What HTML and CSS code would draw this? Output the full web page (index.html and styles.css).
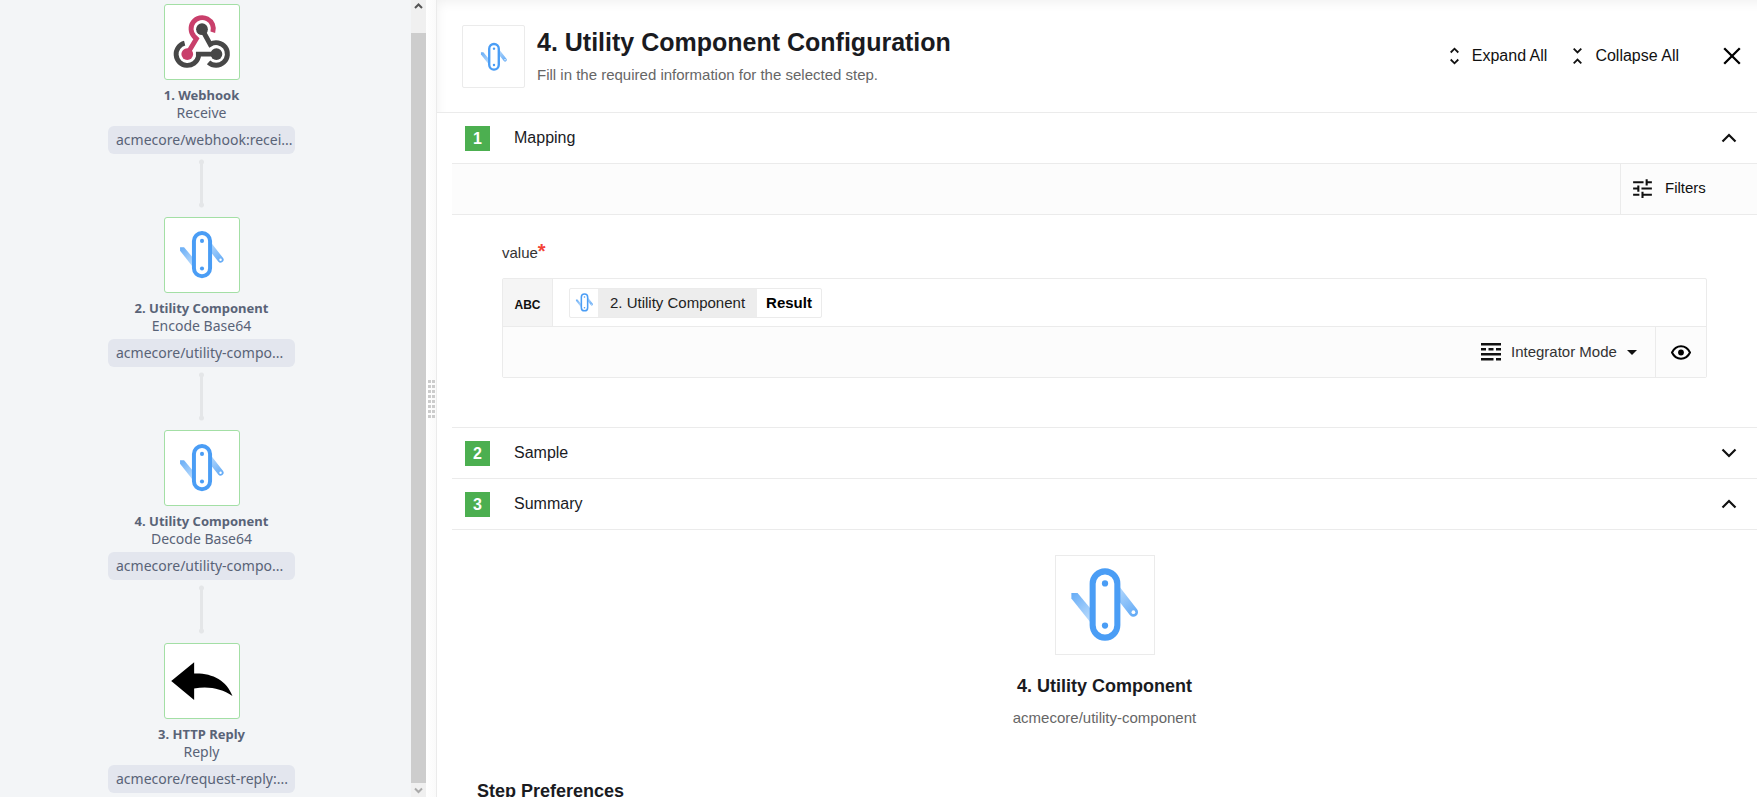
FILE: index.html
```html
<!DOCTYPE html>
<html lang="en">
<head>
<meta charset="utf-8">
<title>Utility Component Configuration</title>
<link rel="stylesheet" href="styles.css">
</head>
<body>
<svg class="defs" aria-hidden="true">
  <defs>
    <linearGradient id="bladeLeft" x1="0" y1="0" x2="0.6" y2="1">
      <stop offset="0" stop-color="#66acf6"/><stop offset="1" stop-color="#b4d8fc"/>
    </linearGradient>
    <linearGradient id="bladeRight" gradientUnits="userSpaceOnUse" x1="80" y1="60" x2="62" y2="34">
      <stop offset="0" stop-color="#66acf6"/><stop offset="1" stop-color="#b4d8fc"/>
    </linearGradient>
    <symbol id="utility" viewBox="0 0 100 100">
      <path d="M15.7 37.7H22L36 54.5V69L15.7 43.3Z" fill="url(#bladeLeft)"/>
      <path d="M57 29L79 57.3" stroke="url(#bladeRight)" stroke-width="9.4" stroke-linecap="round"/>
      <circle cx="79" cy="57.3" r="1.9" fill="#fff"/>
      <rect x="37.4" y="15.7" width="25.2" height="67.6" rx="12.6" fill="#fff" stroke="#4a9df5" stroke-width="6.2"/>
      <circle cx="50" cy="28" r="3.2" fill="#4a9df5"/>
      <circle cx="50" cy="71" r="3.2" fill="#4a9df5"/>
    </symbol>
    <symbol id="chevron-up" viewBox="0 0 16 16">
      <path d="M1.5 11.5L8 5L14.5 11.5" fill="none" stroke="#111" stroke-width="2.2"/>
    </symbol>
    <symbol id="chevron-down" viewBox="0 0 16 16">
      <path d="M1.5 4.5L8 11L14.5 4.5" fill="none" stroke="#111" stroke-width="2.2"/>
    </symbol>
  </defs>
</svg>
<div class="app">
  <aside class="flow">
    <ol class="steps">
      <li class="step">
        <button class="step-box" aria-label="Webhook">
          <svg class="fill-icon" viewBox="222 16 226 226" fill="none">
            <path d="M368 99A34 34 0 1 0 311 112L318 119L290 166" stroke="#c93f6b" stroke-width="15"/>
            <circle cx="290" cy="166" r="18" fill="#c93f6b"/>
            <path d="M282 132.500A34.500 34.500 0 1 0 324 174V166H379" stroke="#474747" stroke-width="15"/>
            <path d="M335 90L360 136A34.500 34.500 0 1 1 355 191" stroke="#474747" stroke-width="15"/>
            <circle cx="335" cy="90" r="18" fill="#474747"/>
            <circle cx="379" cy="166" r="18" fill="#474747"/>
          </svg>
        </button>
        <span class="step-name">1. Webhook</span>
        <span class="step-action">Receive</span>
        <span class="step-path">acmecore/webhook:recei...</span>
        <span class="link-line"></span>
      </li>
      <li class="step">
        <button class="step-box" aria-label="Utility Component"><svg class="icon-64"><use href="#utility"/></svg></button>
        <span class="step-name">2. Utility Component</span>
        <span class="step-action">Encode Base64</span>
        <span class="step-path">acmecore/utility-compo...</span>
        <span class="link-line"></span>
      </li>
      <li class="step">
        <button class="step-box" aria-label="Utility Component"><svg class="icon-64"><use href="#utility"/></svg></button>
        <span class="step-name">4. Utility Component</span>
        <span class="step-action">Decode Base64</span>
        <span class="step-path">acmecore/utility-compo...</span>
        <span class="link-line"></span>
      </li>
      <li class="step">
        <button class="step-box" aria-label="HTTP Reply">
          <svg class="fill-icon" viewBox="222 68 226 226"><path d="M241 181L311 124V158C365 156 410 178 428 227C395 204 355 196 311 204V239Z" fill="#000"/></svg>
        </button>
        <span class="step-name">3. HTTP Reply</span>
        <span class="step-action">Reply</span>
        <span class="step-path">acmecore/request-reply:...</span>
      </li>
    </ol>
    <div class="scrollbar">
      <svg class="scroll-up" viewBox="0 0 15 33"><path d="M4 8L7.500 4.500L11 8" fill="none" stroke="#555" stroke-width="2"/></svg>
      <div class="scroll-thumb"></div>
      <svg class="scroll-down" viewBox="0 0 15 14"><path d="M4 5.500L7.500 9L11 5.500" fill="none" stroke="#aaa" stroke-width="2"/></svg>
    </div>
  </aside>
  <div class="splitter">
    <div class="grip"><i></i><i></i><i></i><i></i><i></i><i></i><i></i><i></i><i></i><i></i><i></i><i></i><i></i><i></i><i></i><i></i></div>
  </div>
  <main class="panel">
    <header class="panel-head">
      <div class="head-icon"><svg class="icon-38"><use href="#utility"/></svg></div>
      <div class="head-text">
        <h1>4. Utility Component Configuration</h1>
        <p>Fill in the required information for the selected step.</p>
      </div>
      <div class="head-actions">
        <button class="text-btn">
          <svg class="fold" viewBox="0 0 9 18"><path d="M0.700 5.500L4.500 1.700L8.300 5.500M0.700 12.500L4.500 16.300L8.300 12.500" fill="none" stroke="#111" stroke-width="1.800"/></svg>
          Expand All
        </button>
        <button class="text-btn">
          <svg class="fold" viewBox="0 0 9 18"><path d="M0.700 1.700L4.500 5.500L8.300 1.700M0.700 16.300L4.500 12.500L8.300 16.300" fill="none" stroke="#111" stroke-width="1.800"/></svg>
          Collapse All
        </button>
        <button class="close" aria-label="Close"><svg viewBox="0 0 18 18"><path d="M1.200 1.200L16.800 16.800M16.800 1.200L1.200 16.800" stroke="#000" stroke-width="2.300"/></svg></button>
      </div>
    </header>

    <section class="block">
      <button class="block-head"><span class="num">1</span><span class="block-title">Mapping</span><svg class="chev"><use href="#chevron-up"/></svg></button>
      <div class="toolbar">
        <button class="filters">
          <svg viewBox="0 0 24 24"><path d="M3 17v2h6v-2zM3 5v2h10V5zM13 21v-2h8v-2h-8v-2h-2v6zM7 9v2H3v2h4v2h2V9zM21 13v-2H11v2zM15 9h2V7h4V5h-4V3h-2z" fill="#111"/></svg>
          Filters
        </button>
      </div>
      <div class="mapping">
        <label class="field-label" for="value">value<span class="req">*</span></label>
        <div class="field">
          <div class="field-row">
            <span class="type">ABC</span>
            <div class="field-value">
              <span class="pill"><span class="pill-icon"><svg class="icon-25"><use href="#utility"/></svg></span><span class="pill-step">2. Utility Component</span><strong class="pill-prop">Result</strong></span>
              <input id="value" type="text">
            </div>
          </div>
          <div class="field-foot">
            <label class="mode">
              <svg class="mode-icon" viewBox="0 0 20 18" aria-label="Mode"><path d="M0 1.300H20M0 6.300H5M7.500 6.300H12.500M15 6.300H20M0 11.300H20M0 16.300H12.500M15 16.300H20" stroke="#111" stroke-width="2.500"/></svg>
              <select><option>Integrator Mode</option></select>
              <svg class="caret" viewBox="0 0 10 5"><path d="M0 0H10L5 5Z" fill="#111"/></svg>
            </label>
            <button class="eye" aria-label="Preview"><svg viewBox="0 0 20 15"><path d="M1 7.500C5 -0.800 15 -0.800 19 7.500C15 15.800 5 15.800 1 7.500Z" fill="none" stroke="#000" stroke-width="2"/><circle cx="10" cy="7.500" r="2.900"/></svg></button>
          </div>
        </div>
      </div>
    </section>

    <section class="block">
      <button class="block-head"><span class="num">2</span><span class="block-title">Sample</span><svg class="chev"><use href="#chevron-down"/></svg></button>
    </section>

    <section class="block">
      <button class="block-head"><span class="num">3</span><span class="block-title">Summary</span><svg class="chev"><use href="#chevron-up"/></svg></button>
      <div class="summary">
        <div class="summary-icon"><svg><use href="#utility"/></svg></div>
        <h2>4. Utility Component</h2>
        <p>acmecore/utility-component</p>
      </div>
      <h2 class="prefs">Step Preferences</h2>
    </section>
  </main>
</div>
</body>
</html>
```
FILE: styles.css
```css
* { box-sizing: border-box; }
body {
  margin: 0;
  color: #1a1b1f;
  background: #fff;
  font: 15px/20px "Liberation Sans", Arial, sans-serif;
}
h1, h2, p, ol { margin: 0; padding: 0; }
svg { display: block; flex: none; }
button, input, select {
  margin: 0;
  padding: 0;
  border: 0;
  border-radius: 0;
  background: none;
  color: inherit;
  font: inherit;
}
button { cursor: pointer; }
.defs { position: absolute; width: 0; height: 0; }
.app { display: flex; height: 100vh; overflow: hidden; }

/* Flow column */
.flow { display: flex; flex: none; background: #f3f5f7; }
.steps {
  width: 411px;
  padding: 4px 8px 0 0;
  overflow: hidden;
  list-style: none;
  color: #596377;
  font: 14px/18px "Noto Sans", sans-serif;
}
.step { display: flex; flex-direction: column; align-items: center; }
.step-box {
  display: flex;
  align-items: center;
  justify-content: center;
  width: 76px;
  height: 76px;
  margin-bottom: 6px;
  border: 1px solid #a3dfa5;
  border-radius: 3px;
  background: #fff;
}
.fill-icon { width: 100%; height: 100%; }
.icon-64 { width: 64px; height: 64px; }
.icon-38 { width: 38px; height: 38px; }
.icon-25 { width: 25px; height: 25px; }
.step-name { font-size: 13px; font-weight: 700; }
.step-path {
  width: 187px;
  margin-top: 4px;
  padding: 0 8px;
  border-radius: 6px;
  background: #e3e6ee;
  line-height: 28px;
  white-space: nowrap;
}
.link-line {
  width: 5px;
  height: 49px;
  margin: 5px 0 9px;
  background:
    radial-gradient(circle at 50% 3px, #e4e6e8 2px, transparent 3px),
    radial-gradient(circle at 50% 46px, #e4e6e8 2px, transparent 3px),
    linear-gradient(#e4e6e8, #e4e6e8) center / 3px 43px no-repeat;
}
.scrollbar { display: flex; flex-direction: column; width: 15px; background: #f0f0f0; }
.scroll-up { width: 15px; height: 33px; }
.scroll-thumb { flex: 1; background: #cdcdcd; }
.scroll-down { width: 15px; height: 14px; }

/* Splitter */
.splitter {
  display: flex;
  flex: none;
  align-items: center;
  width: 11px;
  padding-left: 2px;
  border-right: 1px solid #ebebeb;
  background: linear-gradient(90deg, #fff, #fafafa);
}
.grip { display: grid; grid-template-columns: 3px 3px; gap: 2px 1px; }
.grip i { height: 3px; background: #ccc; }

/* Configuration panel */
.panel { flex: 1; min-width: 0; overflow: hidden; }
.panel-head {
  display: flex;
  align-items: center;
  padding: 25px 16px 24px 25px;
  border-bottom: 1px solid #ebebeb;
  box-shadow: inset 6px 8px 12px -6px #f0f0f0;
}
.head-icon {
  display: flex;
  align-items: center;
  justify-content: center;
  width: 63px;
  height: 63px;
  margin-right: 12px;
  border: 1px solid #ebebeb;
  border-radius: 2px;
  background: #fff;
}
.head-text { flex: 1; padding-bottom: 2px; }
h1 { margin-bottom: 8px; font-size: 25px; line-height: 30px; }
.head-text p { color: #666; }
.head-actions { display: flex; align-items: center; gap: 26px; padding-bottom: 2px; font-size: 16px; }
.text-btn { display: flex; align-items: center; gap: 13px; color: #111; }
.fold { width: 9px; height: 18px; }
.close { margin-left: 18px; }
.close svg { width: 18px; height: 18px; }

.block { margin-left: 15px; }
.block-head {
  display: flex;
  align-items: center;
  width: 100%;
  height: 51px;
  padding: 0 20px 0 13px;
  border-bottom: 1px solid #ebebeb;
  font-size: 16px;
  text-align: left;
}
.num {
  width: 25px;
  margin-right: 24px;
  background: #4caf50;
  color: #fff;
  font-weight: 700;
  line-height: 25px;
  text-align: center;
}
.block-title { flex: 1; }
.chev { width: 16px; height: 16px; }
.toolbar {
  display: flex;
  justify-content: flex-end;
  border-bottom: 1px solid #ebebeb;
  background: #fcfcfc;
}
.filters {
  display: flex;
  align-items: center;
  gap: 10px;
  width: 137px;
  height: 50px;
  padding: 0 0 2px 9px;
  border-left: 1px solid #ebebeb;
  color: #111;
}
.filters svg { width: 25px; height: 25px; }

.mapping { padding: 28px 50px 49px; border-bottom: 1px solid #ebebeb; }
.field-label { display: flex; margin-bottom: 15px; color: #333; }
.req { color: #f44336; font-size: 20px; font-weight: 700; line-height: 16px; }
.field { border: 1px solid #ebebeb; border-radius: 2px; }
.field-row { display: flex; height: 48px; border-bottom: 1px solid #ebebeb; }
.type {
  width: 50px;
  border-right: 1px solid #ebebeb;
  background: #f5f5f5;
  color: #111;
  font-size: 12px;
  font-weight: 700;
  line-height: 52px;
  text-align: center;
}
.field-value { display: flex; flex: 1; align-items: center; padding: 0 16px; }
.field-value input { flex: 1; min-width: 0; height: 30px; outline: 0; }
.pill {
  display: flex;
  border: 1px solid #ebebeb;
  border-radius: 2px;
  color: #222;
  line-height: 28px;
}
.pill-icon { display: flex; align-items: center; justify-content: center; width: 28px; }
.pill-step { padding: 0 12px; background: #ededed; }
.pill-prop { padding: 0 9px; color: #000; }
.field-foot { display: flex; justify-content: flex-end; height: 50px; background: #fcfcfc; }
.mode { display: flex; align-items: center; gap: 10px; padding-right: 18px; color: #333; }
.mode-icon { width: 20px; height: 18px; }
.mode select { appearance: none; }
.caret { width: 10px; height: 5px; }
.eye {
  display: flex;
  align-items: center;
  justify-content: center;
  width: 51px;
  border-left: 1px solid #ebebeb;
}
.eye svg { width: 20px; height: 15px; }

.summary { display: flex; flex-direction: column; align-items: center; padding-top: 25px; }
.summary-icon { width: 100px; height: 100px; margin-bottom: 19px; border: 1px solid #ebebeb; }
.summary-icon svg { width: 100%; height: 100%; }
h2 { font-size: 18px; line-height: 24px; }
.summary p { margin-top: 10px; color: #666; }
.prefs { margin: 51px 0 0 25px; }
```
